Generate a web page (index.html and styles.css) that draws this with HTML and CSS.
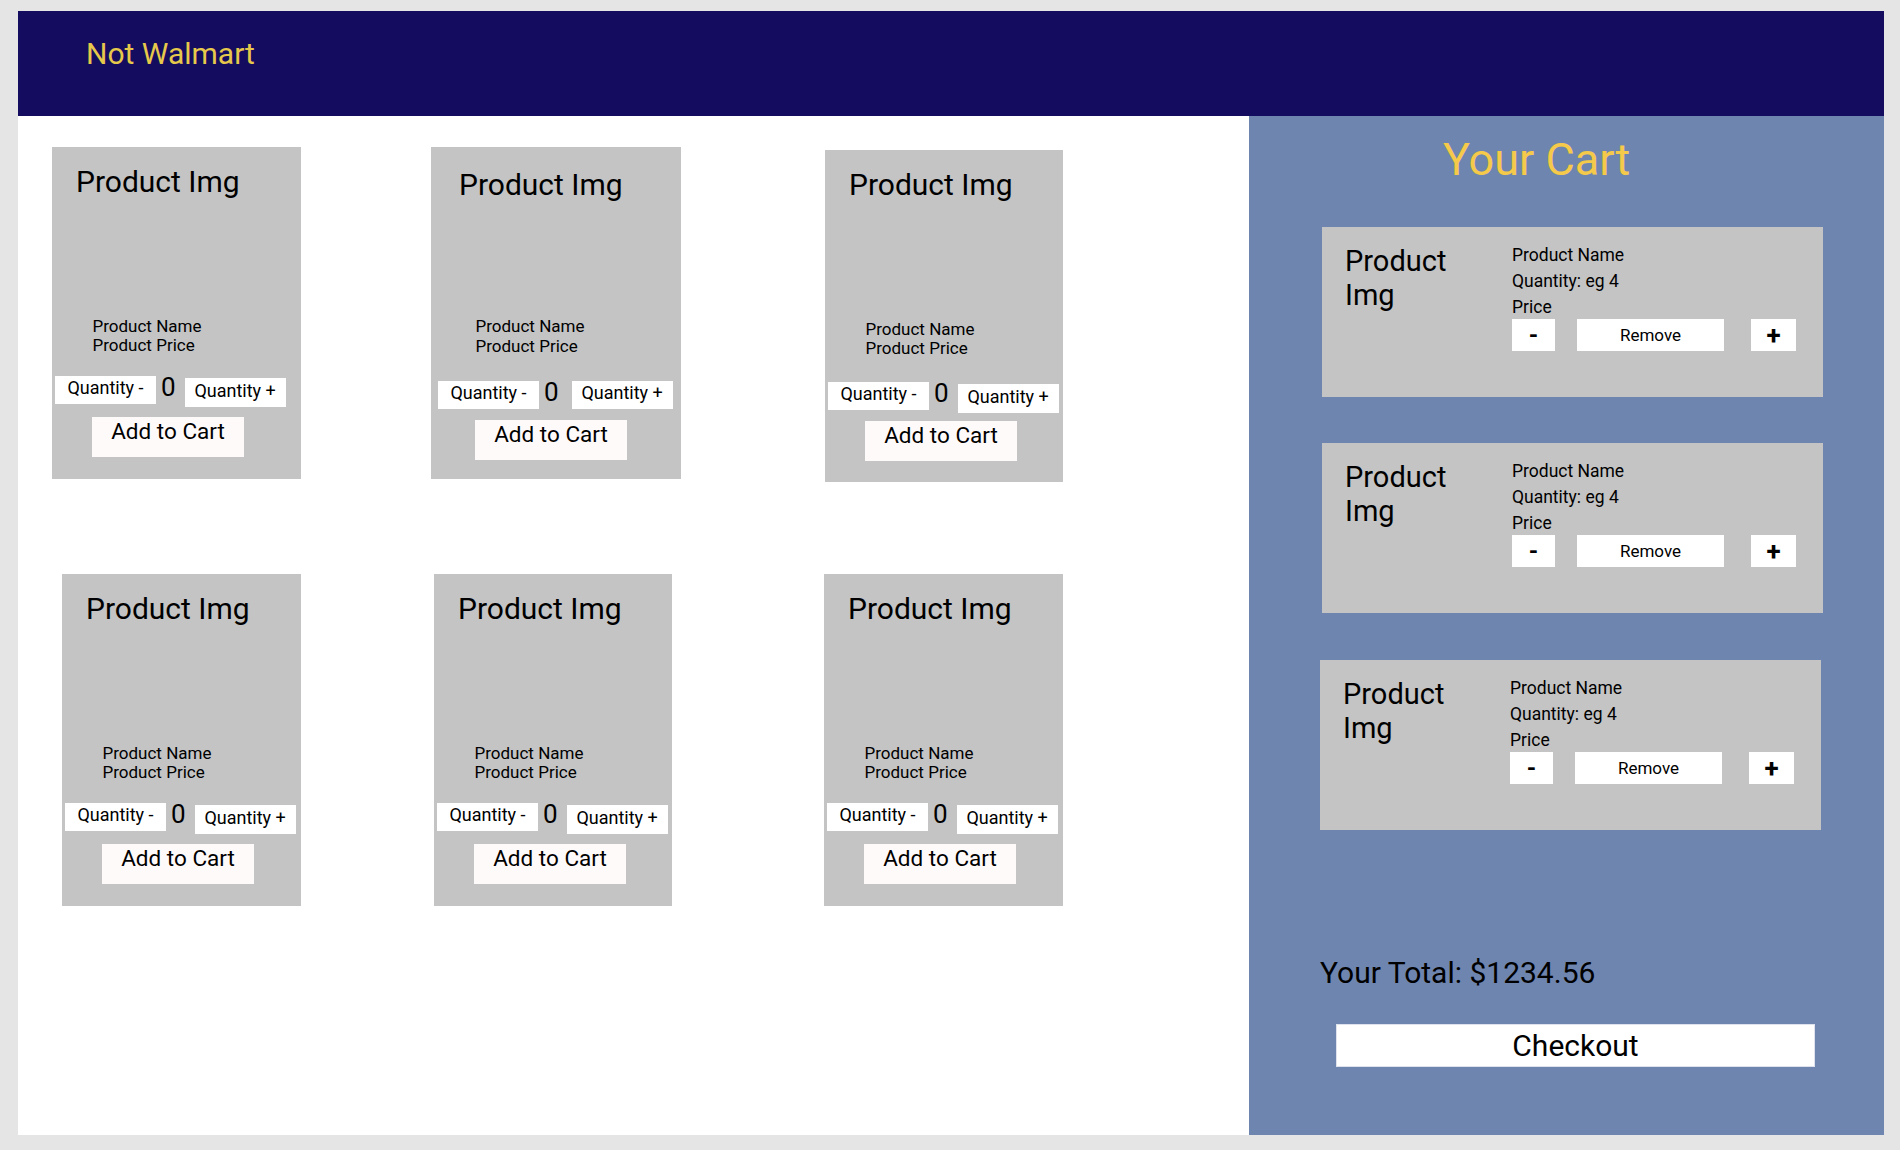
FILE: index.html
```html
<!DOCTYPE html>
<html lang="en">
<head>
<meta charset="utf-8">
<title>Not Walmart</title>
<link rel="stylesheet" href="styles.css">
</head>
<body>
<div class="frame">
  <header class="topbar"><span class="brand">Not Walmart</span></header>
  <main class="content">
    <section class="products">
      <div class="product-grid">
        <article class="card">
          <div class="card-img">Product Img</div>
          <div class="card-info"><div>Product Name</div><div>Product Price</div></div>
          <div class="qty-row">
            <button class="qty-btn">Quantity -</button>
            <span class="qty-val">0</span>
            <button class="qty-btn qty-plus">Quantity +</button>
          </div>
          <button class="add-btn">Add to Cart</button>
        </article>
        <article class="card card--loose">
          <div class="card-img">Product Img</div>
          <div class="card-info"><div>Product Name</div><div>Product Price</div></div>
          <div class="qty-row">
            <button class="qty-btn">Quantity -</button>
            <span class="qty-val">0</span>
            <button class="qty-btn qty-plus">Quantity +</button>
          </div>
          <button class="add-btn">Add to Cart</button>
        </article>
        <article class="card card--low">
          <div class="card-img">Product Img</div>
          <div class="card-info"><div>Product Name</div><div>Product Price</div></div>
          <div class="qty-row">
            <button class="qty-btn">Quantity -</button>
            <span class="qty-val">0</span>
            <button class="qty-btn qty-plus">Quantity +</button>
          </div>
          <button class="add-btn">Add to Cart</button>
        </article>
        <article class="card">
          <div class="card-img">Product Img</div>
          <div class="card-info"><div>Product Name</div><div>Product Price</div></div>
          <div class="qty-row">
            <button class="qty-btn">Quantity -</button>
            <span class="qty-val">0</span>
            <button class="qty-btn qty-plus">Quantity +</button>
          </div>
          <button class="add-btn">Add to Cart</button>
        </article>
        <article class="card">
          <div class="card-img">Product Img</div>
          <div class="card-info"><div>Product Name</div><div>Product Price</div></div>
          <div class="qty-row">
            <button class="qty-btn">Quantity -</button>
            <span class="qty-val">0</span>
            <button class="qty-btn qty-plus">Quantity +</button>
          </div>
          <button class="add-btn">Add to Cart</button>
        </article>
        <article class="card">
          <div class="card-img">Product Img</div>
          <div class="card-info"><div>Product Name</div><div>Product Price</div></div>
          <div class="qty-row">
            <button class="qty-btn">Quantity -</button>
            <span class="qty-val">0</span>
            <button class="qty-btn qty-plus">Quantity +</button>
          </div>
          <button class="add-btn">Add to Cart</button>
        </article>
      </div>
    </section>
    <aside class="cart">
      <h2 class="cart-title">Your Cart</h2>
      <div class="cart-list">
        <div class="cart-item">
          <div class="ci-img">Product Img</div>
          <div class="ci-info">
            <div>Product Name</div>
            <div>Quantity: eg 4</div>
            <div>Price</div>
            <div class="ci-actions">
              <button class="ci-btn ci-minus">-</button>
              <button class="ci-btn ci-remove">Remove</button>
              <button class="ci-btn ci-plus">+</button>
            </div>
          </div>
        </div>
        <div class="cart-item">
          <div class="ci-img">Product Img</div>
          <div class="ci-info">
            <div>Product Name</div>
            <div>Quantity: eg 4</div>
            <div>Price</div>
            <div class="ci-actions">
              <button class="ci-btn ci-minus">-</button>
              <button class="ci-btn ci-remove">Remove</button>
              <button class="ci-btn ci-plus">+</button>
            </div>
          </div>
        </div>
        <div class="cart-item">
          <div class="ci-img">Product Img</div>
          <div class="ci-info">
            <div>Product Name</div>
            <div>Quantity: eg 4</div>
            <div>Price</div>
            <div class="ci-actions">
              <button class="ci-btn ci-minus">-</button>
              <button class="ci-btn ci-remove">Remove</button>
              <button class="ci-btn ci-plus">+</button>
            </div>
          </div>
        </div>
      </div>
      <div class="total">Your Total: $1234.56</div>
      <button class="checkout">Checkout</button>
    </aside>
  </main>
</div>
</body>
</html>
```

FILE: styles.css
```css
html, body {
  margin: 0;
  padding: 0;
}

body {
  background: #e5e5e5;
  font-family: Roboto, "Liberation Sans", Arial, sans-serif;
  color: #000;
  overflow: hidden;
}

button {
  font-family: Roboto, "Liberation Sans", Arial, sans-serif;
  color: #000;
  cursor: pointer;
}

.frame {
  margin: 11px 0 0 18px;
  width: 1866px;
  height: 1124px;
  display: flex;
  flex-direction: column;
}

/* Header */
.topbar {
  height: 105px;
  flex: 0 0 105px;
  box-sizing: border-box;
  background: #140c5f;
  padding: 25px 0 0 68px;
}

.brand {
  display: block;
  font-size: 30px;
  line-height: 35px;
  color: #e6c84b;
}

.content {
  flex: 1;
  display: flex;
  min-height: 0;
}

/* Products */
.products {
  width: 1231px;
  flex: 0 0 1231px;
  box-sizing: border-box;
  background: #fff;
  padding: 31px 0 0 34px;
}

.product-grid {
  display: grid;
  grid-template-columns: 379px 394px 240px;
  grid-template-rows: 332px 332px;
  row-gap: 95px;
  align-items: start;
}

.card {
  width: 249px;
  height: 332px;
  box-sizing: border-box;
  background: #c4c4c4;
  display: flex;
  flex-direction: column;
  align-items: flex-start;
  padding-top: 16.5px;
}

.product-grid .card:nth-child(2) { width: 250px; }
.product-grid .card:nth-child(3) { width: 238px; margin-top: 3px; }
.product-grid .card:nth-child(4) { width: 239px; margin-left: 10px; }
.product-grid .card:nth-child(5) { width: 238px; margin-left: 3px; }
.product-grid .card:nth-child(6) { width: 239px; margin-left: -1px; }

.card-img {
  font-size: 30px;
  line-height: 35px;
  margin-left: 24px;
  white-space: nowrap;
}

.card-info {
  font-size: 17px;
  line-height: 19.5px;
  margin: 118px 0 0 40.5px;
}

.qty-row {
  display: flex;
  align-items: flex-start;
  margin: 20.5px 0 0 3px;
}

.qty-btn {
  width: 101px;
  height: 28px;
  box-sizing: border-box;
  background: #fff;
  border: 0;
  padding: 0 0 5px;
  font-size: 18px;
  line-height: 21px;
  text-align: center;
  white-space: nowrap;
}

.qty-plus {
  margin-top: 2px;
  height: 29px;
}

.qty-val {
  font-size: 26px;
  line-height: 20px;
  margin: 1px 9px 0 5px;
}

.add-btn {
  margin: 10px 0 0 40px;
  width: 152px;
  height: 40px;
  box-sizing: border-box;
  background: #fffafa;
  border: 0;
  padding: 0 0 12px;
  font-size: 22.5px;
  line-height: 26px;
  text-align: center;
  white-space: nowrap;
}

/* Card variants */
.card--loose {
  padding-left: 4px;
  padding-top: 19.5px;
}
.card--loose .card-info { margin-top: 115.5px; }
.card--loose .qty-row { margin-top: 24.5px; }
.card--loose .qty-plus { margin-top: 0; height: 28px; }
.card--loose .qty-val { margin-right: 13px; }
.card--loose .add-btn { margin-top: 11px; }

.card--low .qty-row { margin-top: 23.5px; }
.card--low .add-btn { margin-top: 8px; }

/* Cart */
.cart {
  flex: 1;
  background: #6e85b0;
  box-sizing: border-box;
  padding-top: 16.5px;
  display: flex;
  flex-direction: column;
  align-items: flex-start;
}

.cart-title {
  margin: 0 0 0 194px;
  font-size: 45px;
  font-weight: 400;
  line-height: 53px;
  color: #f5c94a;
}

.cart-list {
  margin: 41px 0 0 73px;
  display: flex;
  flex-direction: column;
  gap: 46px;
}

.cart-item {
  width: 501px;
  height: 170px;
  box-sizing: border-box;
  background: #c4c4c4;
  display: flex;
  align-items: flex-start;
}

.cart-item:nth-child(3) {
  margin-left: -2px;
  margin-top: 1px;
}

.ci-img {
  flex: 0 0 120px;
  margin: 17.5px 47px 0 23px;
  font-size: 29px;
  line-height: 34px;
}

.ci-info {
  margin-top: 15.5px;
  font-size: 17.5px;
  line-height: 26px;
}

.ci-actions {
  display: flex;
  margin-top: -1px;
}

.ci-btn {
  height: 32px;
  box-sizing: border-box;
  background: #fff;
  border: 0;
  padding: 0;
  text-align: center;
}

.ci-minus {
  width: 43px;
  font-size: 24px;
  font-weight: 700;
}

.ci-remove {
  width: 147px;
  margin-left: 22px;
  font-size: 17px;
}

.ci-plus {
  width: 45px;
  margin-left: 27px;
  font-size: 26px;
  font-weight: 700;
}

.total {
  margin: 125px 0 0 71px;
  font-size: 30px;
  line-height: 35px;
}

.checkout {
  margin: 34px 0 0 87px;
  width: 479px;
  height: 43px;
  box-sizing: border-box;
  background: #fff;
  border: 1px solid #dde2ec;
  padding: 0;
  font-size: 30px;
  line-height: 35px;
  text-align: center;
}
```
